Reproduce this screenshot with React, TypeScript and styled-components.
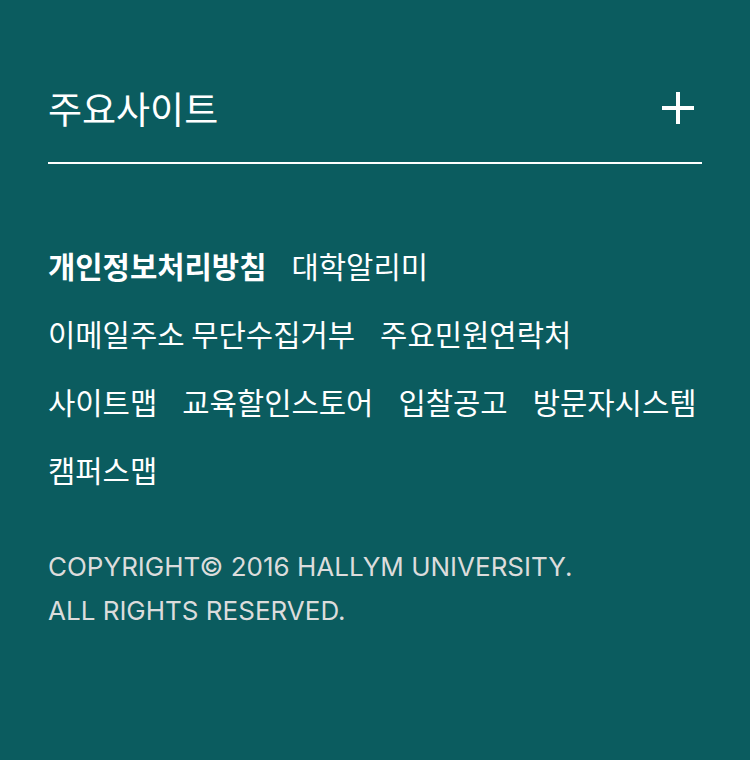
import React from "react";
import styled, { createGlobalStyle } from "styled-components";

const Global = createGlobalStyle`
  html, body { margin: 0; padding: 0; background: #0b5c5f; }
  body { font-family: Inter, "Noto Sans CJK KR", sans-serif; }
`;

const Footer = styled.footer`
  width: 750px;
  min-height: 760px;
  box-sizing: border-box;
  background: #0b5c5f;
  padding: 76px 48px 0 48px;
  color: #fff;
`;

const Header = styled.div`
  display: flex;
  align-items: center;
  justify-content: space-between;
  height: 64px;
  border-bottom: 2px solid #fff;
  padding-bottom: 22px;
`;

const Title = styled.h2`
  margin: 0;
  font-family: "Noto Sans CJK KR", sans-serif;
  font-size: 37px;
  font-weight: 400;
  color: #fff;
`;

const ToggleButton = styled.button`
  width: 40px;
  height: 40px;
  margin-right: 4px;
  padding: 0;
  border: none;
  background: transparent;
  display: flex;
  align-items: center;
  justify-content: center;
  cursor: pointer;
`;

const Links = styled.ul`
  list-style: none;
  margin: 81px 0 0 0;
  padding: 0;
  display: flex;
  flex-wrap: wrap;
  column-gap: 25px;
  row-gap: 26px;
`;

const LinkItem = styled.li<{ $bold?: boolean }>`
  font-family: "Noto Sans CJK KR", sans-serif;
  font-size: 29.7px;
  line-height: 42px;
  font-weight: ${(p) => (p.$bold ? 700 : 400)};
  color: #fff;
  white-space: nowrap;
`;

const Copyright = styled.p`
  margin: 54px 0 0 0;
  font-family: Inter, sans-serif;
  font-size: 26px;
  line-height: 44px;
  font-weight: 400;
  color: #dcdcdc;
`;

const links = [
  { label: "개인정보처리방침", bold: true },
  { label: "대학알리미" },
  { label: "이메일주소 무단수집거부" },
  { label: "주요민원연락처" },
  { label: "사이트맵" },
  { label: "교육할인스토어" },
  { label: "입찰공고" },
  { label: "방문자시스템" },
  { label: "캠퍼스맵" },
];

export default function App() {
  return (
    <>
      <Global />
      <Footer>
        <Header>
          <Title>주요사이트</Title>
          <ToggleButton aria-label="열기">
            <svg width="32" height="32" viewBox="0 0 32 32">
              <rect x="14" y="0" width="4" height="32" fill="#fff" />
              <rect x="0" y="14" width="32" height="4" fill="#fff" />
            </svg>
          </ToggleButton>
        </Header>
        <Links>
          {links.map((l) => (
            <LinkItem key={l.label} $bold={l.bold}>
              {l.label}
            </LinkItem>
          ))}
        </Links>
        <Copyright>
          COPYRIGHT© 2016 HALLYM UNIVERSITY.
          <br />
          ALL RIGHTS RESERVED.
        </Copyright>
      </Footer>
    </>
  );
}
